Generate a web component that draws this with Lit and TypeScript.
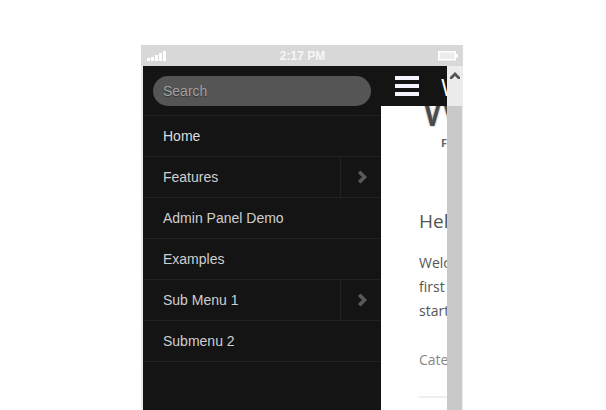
import { LitElement, html, css, svg } from "lit";
import { customElement } from "lit/decorators.js";

const items: [string, boolean][] = [
  ["Home", false],
  ["Features", true],
  ["Admin Panel Demo", false],
  ["Examples", false],
  ["Sub Menu 1", true],
  ["Submenu 2", false],
];

@customElement("app-root")
export class AppRoot extends LitElement {
  static styles = css`
    :host { display: block; width: 606px; height: 410px; background: #fff; overflow: hidden; font-family: "Liberation Sans", Arial, sans-serif; }
    .phone { margin: 45px 0 0 141px; width: 322px; height: 365px; display: flex; flex-direction: column; overflow: hidden; }
    .status { flex: 0 0 21px; height: 21px; background: #d8d8d8; display: grid; grid-template-columns: 1fr auto 1fr; align-items: center; padding: 0 5px 0 6px; box-sizing: border-box; color: #f6f6f6; font-size: 12px; font-weight: bold; }
    .signal { display: flex; align-items: flex-end; gap: 1px; height: 10px; }
    .signal i { display: block; width: 3px; background: #fff; }
    .battery { justify-self: end; display: block; }
    .body { flex: 1; display: flex; min-height: 0; padding-left: 2px; background: #ececec; }
    .side { flex: 0 0 238px; background: #141414; display: flex; flex-direction: column; }
    .searchwrap { padding: 10px; box-sizing: border-box; border-bottom: 1px solid #222; height: 50px; }
    .search { height: 30px; border-radius: 15px; background: #555; color: #a0a0a0; font-size: 14px; line-height: 30px; padding-left: 10px; text-shadow: 0 1px 1px #333; }
    .row { height: 40px; border-bottom: 1px solid #222; display: flex; align-items: stretch; color: #cfcfcf; font-size: 14px; }
    .row.first { color: #dedede; }
    .label { flex: 1; padding-left: 20px; line-height: 40px; }
    .arrow { flex: 0 0 41px; border-left: 1px solid #222; display: flex; align-items: center; justify-content: center; padding-left: 3px; box-sizing: border-box; }
    .main { flex: 0 0 66px; background: #fff; display: flex; flex-direction: column; overflow: hidden; }
    .bar { flex: 0 0 40px; background: #141414; display: flex; align-items: center; gap: 22px; padding-left: 14px; overflow: hidden; color: #fff; font-size: 24px; font-family: "Open Sans", sans-serif; }
    .burger { flex: 0 0 24px; display: flex; flex-direction: column; gap: 3.5px; }
    .burger i { display: block; height: 4.5px; background: #f4f4ff; }
    .content { flex: 1; position: relative; overflow: hidden; font-family: "Open Sans", "DejaVu Sans", sans-serif; color: #555; white-space: nowrap; }
    .logo { font-size: 46px; line-height: 4px; height: 26px; margin-left: 40px; color: #4a4a4a; text-shadow: 0 0 2px #777; }
    .sub { font-size: 11px; font-weight: bold; color: #666; margin: 4px 0 0 60px; line-height: 14px; }
    .copy { padding-left: 38px; }
    h2 { font-weight: 400; font-size: 19px; margin: 59px 0 0; line-height: 24px; color: #555; }
    p { font-size: 14px; margin: 18px 0 0; line-height: 24px; }
    .cat { color: #888; margin-top: 25px; }
    hr { border: 0; height: 2px; background: #eee; margin: 24px 0 0; }
    .scroll { flex: 0 0 15px; background: #c9c9c9; display: flex; flex-direction: column; border-right: 1px solid #ececec; }
    .up { height: 40px; background: #ececec; display: flex; justify-content: center; padding-top: 6px; box-sizing: border-box; }
  `;

  private chevron() {
    return svg`<svg width="12" height="14" viewBox="0 0 12 14"><path d="M1 3 L3.5 0.5 L10 7 L3.5 13.5 L1 11 L5 7 Z" fill="#5a5a5a"/></svg>`;
  }

  render() {
    return html`<div class="phone">
      <div class="status">
        <div class="signal">
          ${[3, 4, 6, 8, 10].map((h) => html`<i style="height:${h}px"></i>`)}
        </div>
        <span>2:17 PM</span>
        <svg class="battery" width="20" height="10" viewBox="0 0 20 10">
          <rect x="0.75" y="0.75" width="16.5" height="8" fill="#ececec" stroke="#fff" stroke-width="1.5"/>
          <rect x="18" y="3" width="2" height="3.5" fill="#fff"/>
        </svg>
      </div>
      <div class="body">
        <nav class="side">
          <div class="searchwrap"><div class="search">Search</div></div>
          ${items.map(
            ([t, a], i) => html`<div class="row ${i === 0 ? "first" : ""}">
              <div class="label">${t}</div>
              ${a ? html`<div class="arrow">${this.chevron()}</div>` : ""}
            </div>`
          )}
        </nav>
        <main class="main">
          <div class="bar"><div class="burger"><i></i><i></i><i></i></div><span>W</span></div>
          <div class="content">
            <div class="logo">W</div>
            <div class="sub">F</div>
            <div class="copy">
              <h2>Hello</h2>
              <p>Welcome<br />first post<br />start</p>
              <p class="cat">Categories</p>
              <hr />
            </div>
          </div>
        </main>
        <div class="scroll">
          <div class="up">
            <svg width="10" height="7" viewBox="0 0 10 7"><path d="M5 0 L10 5 L10 7 L8 7 L5 4 L2 7 L0 7 L0 5 Z" fill="#555"/></svg>
          </div>
        </div>
      </div>
    </div>`;
  }
}
